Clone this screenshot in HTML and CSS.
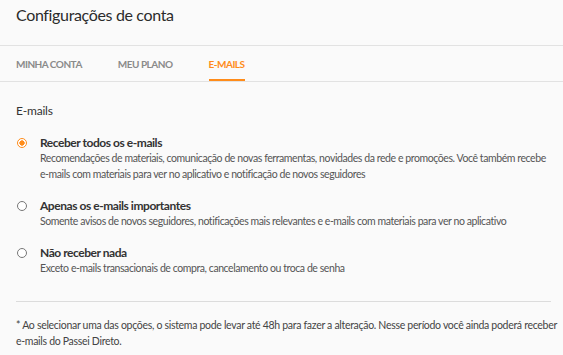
FILE: index.html
```html
<!DOCTYPE html>
<html lang="pt-BR">
<head>
    <meta charset="UTF-8">
    <meta name="viewport" content="width=device-width, initial-scale=1.0">
    <title>Configurações de conta</title>
    <link rel="stylesheet" href="styles.css">
</head>
<body>
    <div class="page">
        <header class="page-header">
            <h1>Configurações de conta</h1>
        </header>

        <nav class="tabs">
            <a class="tab">MINHA CONTA</a>
            <a class="tab">MEU PLANO</a>
            <a class="tab active">E-MAILS</a>
        </nav>

        <section class="content">
            <h2>E-mails</h2>

            <label class="option">
                <input type="radio" name="emails" checked>
                <span class="radio"></span>
                <span class="option-text">
                    <span class="option-title">Receber todos os e-mails</span>
                    <span class="option-desc">Recomendações de materiais, comunicação de novas ferramentas, novidades da rede e promoções. Você também recebe <span class="nowrap">e-mails</span> com materiais para ver no aplicativo e notificação de novos seguidores</span>
                </span>
            </label>

            <label class="option">
                <input type="radio" name="emails">
                <span class="radio"></span>
                <span class="option-text">
                    <span class="option-title">Apenas os e-mails importantes</span>
                    <span class="option-desc">Somente avisos de novos seguidores, notificações mais relevantes e e-mails com materiais para ver no aplicativo</span>
                </span>
            </label>

            <label class="option">
                <input type="radio" name="emails">
                <span class="radio"></span>
                <span class="option-text">
                    <span class="option-title">Não receber nada</span>
                    <span class="option-desc">Exceto e-mails transacionais de compra, cancelamento ou troca de senha</span>
                </span>
            </label>

            <hr class="divider">

            <p class="note">* Ao selecionar uma das opções, o sistema pode levar até 48h para fazer a alteração. Nesse período você ainda poderá receber <span class="nowrap">e-mails</span> do Passei Direto.</p>
        </section>
    </div>
</body>
</html>
```

FILE: styles.css
```css
body {
    margin: 0;
    background-color: #fafafa;
    font-family: Lato, "Noto Sans", sans-serif;
    color: #333;
}

.page {
    width: 563px;
}

.nowrap {
    white-space: nowrap;
}

.page-header {
    height: 46px;
    padding: 0 16px;
    border-bottom: 1px solid #e2e2e2;
    box-sizing: border-box;
}

.page-header h1 {
    margin: 0;
    padding-top: 5px;
    font-size: 16px;
    line-height: 20px;
    font-weight: 400;
    letter-spacing: -0.35px;
    color: #2b2b2b;
}

.tabs {
    display: flex;
    gap: 36px;
    padding: 0 16px;
    height: 35px;
    border-bottom: 1px solid #e2e2e2;
}

.tab {
    display: flex;
    align-items: center;
    height: 100%;
    box-sizing: border-box;
    padding-top: 2px;
    font-size: 10px;
    font-weight: 700;
    letter-spacing: -0.5px;
    color: #8a8a8a;
    border-bottom: 2px solid transparent;
}

.tab.active {
    color: #ff8c1a;
    border-bottom-color: #ff8c1a;
}

.content {
    padding: 0 4px 0 16px;
}

.content h2 {
    margin: 0;
    padding: 21px 0 17px;
    font-size: 12px;
    line-height: 16px;
    font-weight: 400;
    letter-spacing: -0.2px;
    color: #333;
}

.option {
    display: flex;
    align-items: flex-start;
    margin-bottom: 17px;
    cursor: pointer;
}

.option input {
    display: none;
}

.radio {
    flex: none;
    width: 10px;
    height: 10px;
    margin: 2px 13px 0 1px;
    border: 1px solid #777;
    border-radius: 50%;
    box-sizing: border-box;
    background-color: #fff;
}

.option input:checked + .radio {
    border: 1.5px solid #ff8c1a;
    background: radial-gradient(circle, #ff8c1a 0 2.4px, #fff 2.9px);
}

.option-text {
    display: flex;
    flex-direction: column;
    max-width: 517px;
}

.option-title {
    font-size: 12px;
    line-height: 14px;
    font-weight: 700;
    letter-spacing: -0.45px;
    color: #333;
}

.option-desc {
    font-size: 10.5px;
    line-height: 16px;
    letter-spacing: -0.42px;
    color: #555;
}

.divider {
    margin: 25px 8px 0 0;
    border: 0;
    border-top: 1px solid #dcdcdc;
}

.note {
    margin: 0;
    padding-top: 15px;
    font-size: 10.5px;
    line-height: 16px;
    letter-spacing: -0.3px;
    color: #444;
}
```
